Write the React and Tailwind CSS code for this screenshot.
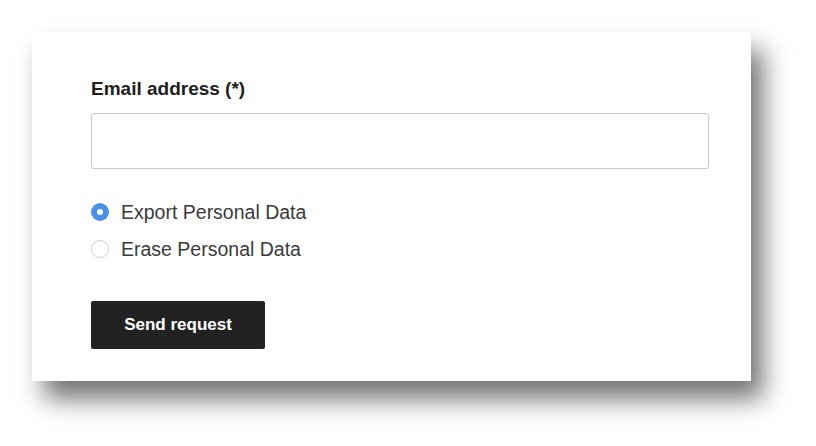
import React, { useState } from "react";

const App = () => {
  const [choice, setChoice] = useState("export");

  return (
    <div className="w-[816px] h-[446px] bg-white pt-[32px] pl-[32px]" style={{ fontFamily: "'Liberation Sans', Arial, sans-serif" }}>
      <div className="w-[719px] h-[349px] bg-white shadow-[12px_18px_24px_rgba(0,0,0,0.55)] pl-[59px] pt-[46px]">
        <label htmlFor="email" className="block text-[19px] font-bold text-[#1e1e1e] leading-[22px]">
          Email address (*)
        </label>
        <input
          id="email"
          type="email"
          className="mt-[13px] block w-[618px] h-[56px] border border-[#c8c8c8] rounded-[3px] px-3 focus:outline-none"
        />
        <div className="mt-[32px] flex flex-col gap-[15px]">
          {[
            ["export", "Export Personal Data"],
            ["erase", "Erase Personal Data"],
          ].map(([key, text]) => (
            <div key={key} className="flex items-center cursor-pointer" onClick={() => setChoice(key)}>
              {choice === key ? (
                <span className="w-[18px] h-[18px] rounded-full bg-[#4a90e8] flex items-center justify-center">
                  <span className="w-[6px] h-[6px] rounded-full bg-white" />
                </span>
              ) : (
                <span className="w-[18px] h-[18px] rounded-full border border-[#cfcfcf] bg-white" />
              )}
              <span className="ml-[12px] text-[19.5px] text-[#3a3a3a] leading-[22px]">{text}</span>
            </div>
          ))}
        </div>
        <div className="mt-[41px] w-[174px] h-[48px] bg-[#222222] rounded-[2px] flex items-center justify-center text-white text-[17px] font-bold cursor-pointer">
          Send request
        </div>
      </div>
    </div>
  );
};

export default App;
